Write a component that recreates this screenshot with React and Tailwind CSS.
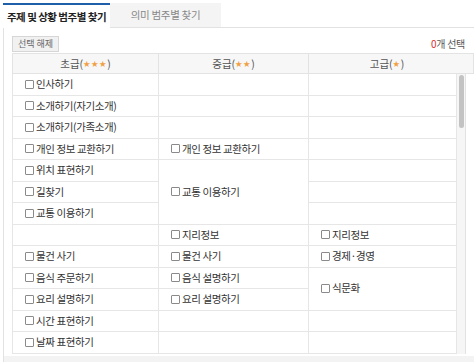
import React from "react";

const font = { fontFamily: '"Noto Sans CJK KR", "Noto Sans", sans-serif' };

// [col, rowStart, rowSpan, label]
const cells = [
  [1, 1, 1, "인사하기"],
  [1, 2, 1, "소개하기(자기소개)"],
  [1, 3, 1, "소개하기(가족소개)"],
  [1, 4, 1, "개인 정보 교환하기"],
  [1, 5, 1, "위치 표현하기"],
  [1, 6, 1, "길찾기"],
  [1, 7, 1, "교통 이용하기"],
  [1, 8, 1, ""],
  [1, 9, 1, "물건 사기"],
  [1, 10, 1, "음식 주문하기"],
  [1, 11, 1, "요리 설명하기"],
  [1, 12, 1, "시간 표현하기"],
  [1, 13, 1, "날짜 표현하기"],
  [2, 1, 1, ""],
  [2, 2, 1, ""],
  [2, 3, 1, ""],
  [2, 4, 1, "개인 정보 교환하기"],
  [2, 5, 3, "교통 이용하기"],
  [2, 8, 1, "지리정보"],
  [2, 9, 1, "물건 사기"],
  [2, 10, 1, "음식 설명하기"],
  [2, 11, 1, "요리 설명하기"],
  [2, 12, 1, ""],
  [2, 13, 1, ""],
  [3, 1, 1, ""],
  [3, 2, 1, ""],
  [3, 3, 1, ""],
  [3, 4, 1, ""],
  [3, 5, 1, ""],
  [3, 6, 1, ""],
  [3, 7, 1, ""],
  [3, 8, 1, "지리정보"],
  [3, 9, 1, "경제·경영"],
  [3, 10, 2, "식문화"],
  [3, 12, 1, ""],
  [3, 13, 1, ""],
];

const Check = ({ label }) => (
  <label className="flex items-center text-[10.5px] tracking-[-0.4px] text-[#333] leading-none whitespace-nowrap">
    <span className="w-[9px] h-[9px] border border-[#8a8a8a] rounded-[1px] mr-[2px] bg-white" />
    {label}
  </label>
);

const Stars = ({ n }) => (
  <span className="text-[#f0a044] text-[7px] align-middle tracking-[1px]">{"★".repeat(n)}</span>
);

const App = () => {
  return (
    <div className="w-[474px] h-[362px] bg-white overflow-hidden flex flex-col" style={font}>
      {/* tabs */}
      <div className="flex pt-[3px] pl-[3px] h-[28px]">
        <div className="w-[107px] border-t-2 border-[#1f5ea8] bg-white flex items-center justify-center text-[10.5px] tracking-[-0.5px] font-bold text-[#222] whitespace-nowrap">
          주제 및 상황 범주별 찾기
        </div>
        <div className="w-[111px] bg-[#f4f4f4] border-b border-[#e2e2e2] flex items-center justify-center text-[10.5px] tracking-[-0.3px] text-[#888] whitespace-nowrap">
          의미 범주별 찾기
        </div>
        <div className="flex-1 border-b border-[#e2e2e2]" />
      </div>

      {/* panel */}
      <div className="ml-[3px] border-l border-[#e2e2e2] flex-1 flex flex-col">
        <div className="flex items-center justify-between pl-[8px] pr-[9px] pt-[7px] h-[24px]">
          <button className="h-[16px] px-[5px] text-[9px] leading-none text-[#666] bg-[#f1f1f1] border border-[#d6d6d6]">
            선택 해제
          </button>
          <span className="text-[10px] tracking-[-0.3px] text-[#555]">
            <span className="text-[#d9302c]">0</span>개 선택
          </span>
        </div>

        <div className="pl-[8px] pt-[1px]">
          {/* header */}
          <div className="grid grid-cols-[146px_150px_156px] h-[21px] bg-[#f7f7f7] border border-[#e3e3e3] text-[10.5px] text-[#555]">
            <div className="flex items-center justify-center border-r border-[#e3e3e3]">
              초급(<Stars n={3} />)
            </div>
            <div className="flex items-center justify-center border-r border-[#e3e3e3]">
              중급(<Stars n={2} />)
            </div>
            <div className="flex items-center justify-center">
              고급(<Stars n={1} />)
            </div>
          </div>

          {/* body */}
          <div className="flex">
            <div className="grid grid-cols-[146px_150px_148px] grid-rows-[repeat(13,21.5px)] border-l border-[#e6e6e6]">
              {cells.map(([c, r, s, label], i) => (
                <div
                  key={i}
                  className="flex items-center pl-[12px] border-b border-r border-[#e6e6e6]"
                  style={{ gridColumn: c, gridRow: `${r} / span ${s}` }}
                >
                  {label && <Check label={label} />}
                </div>
              ))}
            </div>
            <div className="w-[9px] bg-[#f6f6f6] border-r border-[#e3e3e3] pt-[1px] flex justify-center">
              <div className="w-[5px] h-[53px] rounded-full bg-[#c3c3c3]" />
            </div>
          </div>
        </div>

        <div className="flex-1 mt-[2px] bg-[#f3f3f3]" />
      </div>
    </div>
  );
};

export default App;
